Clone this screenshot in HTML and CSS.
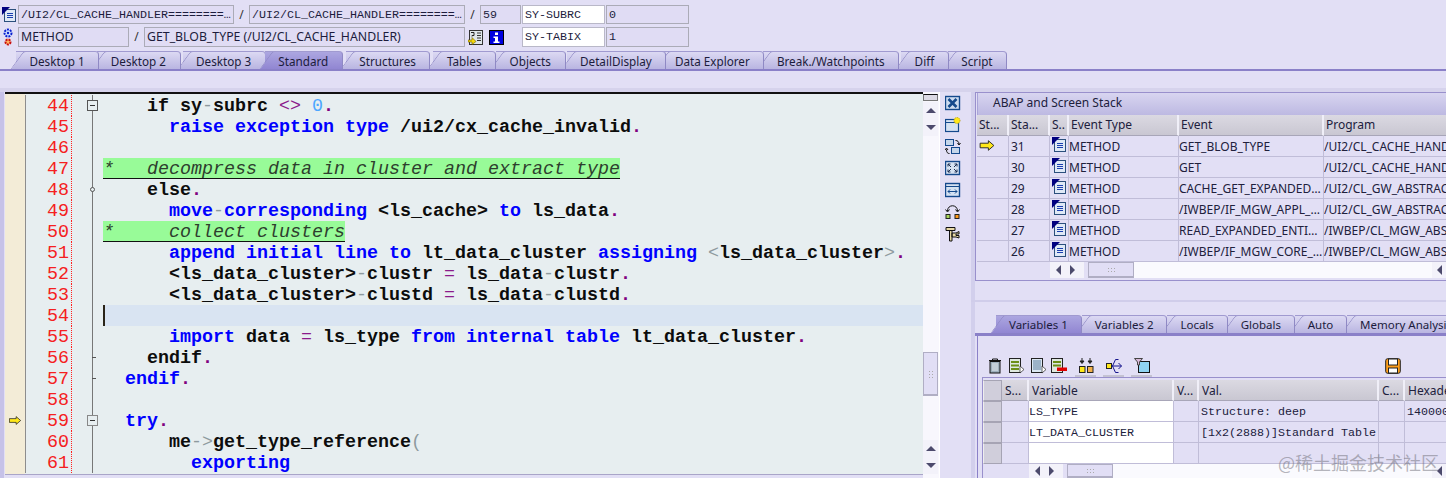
FILE: index.html
```html
<!DOCTYPE html>
<html lang="en">
<head>
<meta charset="utf-8">
<title>ABAP Debugger</title>
<link rel="stylesheet" href="styles.css">
</head>
<body>
<svg class="defs" width="0" height="0">
  <symbol id="doc" viewBox="0 0 16 16">
    <rect x="3.5" y="2.5" width="11" height="12" fill="#dfe9f6" stroke="#2b4f7c"/>
    <path d="M1 0h8L1 8z" fill="#00007f"/>
    <path d="M6 6.5h6M6 8.500h6M6 10.500h6" stroke="#1b3fb0" fill="none"/>
  </symbol>
  <symbol id="arrow" viewBox="0 0 16 12">
    <path d="M.5 3.500h9V.8l6 5.200-6 5.200V8.500h-9z" fill="#ffe81a" stroke="#222"/>
  </symbol>
</svg>

<div class="page">
  <header class="head">
    <div class="head-row">
      <svg class="ico-lead"><use href="#doc"/></svg>
      <div class="field mono w-prog">/UI2/CL_CACHE_HANDLER===================CP</div>
      <span class="sep">/</span>
      <div class="field mono w-prog2">/UI2/CL_CACHE_HANDLER===================CM00D</div>
      <span class="sep">/</span>
      <div class="field mono w-line">59</div>
      <div class="field input mono w-sy">SY-SUBRC</div>
      <div class="field mono w-val">0</div>
    </div>
    <div class="head-row tall">
      <svg class="ico-lead" viewBox="0 0 16 18">
        <circle cx="7" cy="5" r="3.500" fill="#cfe0ff" stroke="#0a1fd0" stroke-width="2" stroke-dasharray="2 1"/>
        <circle cx="7" cy="5" r="1.200" fill="#0a1fd0"/>
        <circle cx="7" cy="14" r="2.500" fill="#ffb060" stroke="#c80f0f" stroke-width="2" stroke-dasharray="2 1"/>
      </svg>
      <div class="field w-type">METHOD</div>
      <span class="sep">/</span>
      <div class="field w-event">GET_BLOB_TYPE (/UI2/CL_CACHE_HANDLER)</div>
      <svg class="ico-src" viewBox="0 0 15 15">
        <rect x="1.500" y=".5" width="13" height="14" fill="#dfe6ea" stroke="#333"/>
        <path d="M9 3h4M9 5.500h4M9 8h4M9 10.500h4" stroke="#333"/>
        <path d="M3 2.500h3v3H4v1" stroke="#222" fill="none"/>
        <path d="M0 10h4V7.500l4 4-4 3V12H0z" fill="#f5d90a" stroke="#6b5a00" stroke-width=".6"/>
      </svg>
      <svg class="ico-info" viewBox="0 0 15 15">
        <rect width="15" height="15" fill="#0000e0"/>
        <rect x=".5" y=".5" width="14" height="14" fill="none" stroke="#000"/>
        <path d="M6 2.500h3v2.500H6zM4.500 6.500H9v5h1.500v1.500h-6v-1.500H6V8H4.500z" fill="#fff"/>
      </svg>
      <div class="field input mono w-sy">SY-TABIX</div>
      <div class="field mono w-val">1</div>
    </div>
  </header>

  <nav class="tabs tabs-main">
    <span class="tab">Desktop 1</span>
    <span class="tab">Desktop 2</span>
    <span class="tab">Desktop 3</span>
    <span class="tab active">Standard</span>
    <span class="tab">Structures</span>
    <span class="tab">Tables</span>
    <span class="tab">Objects</span>
    <span class="tab">DetailDisplay</span>
    <span class="tab">Data Explorer</span>
    <span class="tab">Break./Watchpoints</span>
    <span class="tab">Diff</span>
    <span class="tab">Script</span>
  </nav>
  <div class="band"></div>

  <main class="main">
    <section class="editor-wrap">
      <div class="editor">
        <div class="line"><i class="gut"></i><b class="num">44</b><i class="fold"><i class="box"></i></i><code>    if sy<u>-</u>subrc <s>&lt;&gt;</s> <em>0</em><q>.</q></code></div>
        <div class="line"><i class="gut"></i><b class="num">45</b><i class="fold"></i><code>      <a>raise exception type</a> /ui2/cx_cache_invalid<q>.</q></code></div>
        <div class="line"><i class="gut"></i><b class="num">46</b><i class="fold"></i><code></code></div>
        <div class="line"><i class="gut"></i><b class="num">47</b><i class="fold"></i><code><span class="cmt">*   decompress data in cluster and extract type</span></code></div>
        <div class="line"><i class="gut"></i><b class="num">48</b><i class="fold"><i class="dot"></i></i><code>    else<q>.</q></code></div>
        <div class="line"><i class="gut"></i><b class="num">49</b><i class="fold"></i><code>      <a>move<u>-</u>corresponding</a> &lt;ls_cache&gt; <a>to</a> ls_data<q>.</q></code></div>
        <div class="line"><i class="gut"></i><b class="num">50</b><i class="fold"></i><code><span class="cmt">*     collect clusters</span></code></div>
        <div class="line"><i class="gut"></i><b class="num">51</b><i class="fold"></i><code>      <a>append initial line to</a> lt_data_cluster <a>assigning</a> <u>&lt;</u>ls_data_cluster<u>&gt;</u><q>.</q></code></div>
        <div class="line"><i class="gut"></i><b class="num">52</b><i class="fold"></i><code>      &lt;ls_data_cluster&gt;<u>-</u>clustr <s>=</s> ls_data<u>-</u>clustr<q>.</q></code></div>
        <div class="line"><i class="gut"></i><b class="num">53</b><i class="fold"></i><code>      &lt;ls_data_cluster&gt;<u>-</u>clustd <s>=</s> ls_data<u>-</u>clustd<q>.</q></code></div>
        <div class="line current"><i class="gut"></i><b class="num">54</b><i class="fold"></i><code></code></div>
        <div class="line"><i class="gut"></i><b class="num">55</b><i class="fold"></i><code>      <a>import</a> data <s>=</s> ls_type <a>from internal table</a> lt_data_cluster<q>.</q></code></div>
        <div class="line"><i class="gut"></i><b class="num">56</b><i class="fold"><i class="tick"></i></i><code>    endif<q>.</q></code></div>
        <div class="line"><i class="gut"></i><b class="num">57</b><i class="fold"><i class="tick"></i></i><code>  <a>endif</a><q>.</q></code></div>
        <div class="line"><i class="gut"></i><b class="num">58</b><i class="fold"></i><code></code></div>
        <div class="line"><i class="gut"><svg class="ico-pc"><use href="#arrow"/></svg></i><b class="num">59</b><i class="fold"><i class="box light"></i></i><code>  <a>try</a><q>.</q></code></div>
        <div class="line"><i class="gut"></i><b class="num">60</b><i class="fold"></i><code>      me<u>-&gt;</u>get_type_reference<u>(</u></code></div>
        <div class="line"><i class="gut"></i><b class="num">61</b><i class="fold"></i><code>        <a>exporting</a></code></div>
      </div>
      <div class="hbar"></div>
    </section>

    <aside class="vbar">
      <div class="grip"></div>
      <div class="sb-btn"><i class="tri up"></i></div>
      <div class="sb-btn"><i class="tri down"></i></div>
      <div class="track"></div>
      <div class="vthumb"><i class="dots"></i></div>
      <div class="track short"></div>
      <div class="sb-btn"><i class="tri up"></i></div>
      <div class="sb-btn"><i class="tri down"></i></div>
    </aside>

    <div class="tools">
      <svg viewBox="0 0 16 16"><rect x=".5" y="1.500" width="14" height="13" fill="#cddcf0" stroke="#14498c" stroke-width="1.400"/><path d="M3.500 4l8 8M11.500 4l-8 8" stroke="#14498c" stroke-width="2.600"/></svg>
      <svg viewBox="0 0 16 16"><rect x=".5" y="2.500" width="13" height="12" fill="#d5e2f2" stroke="#14498c" stroke-width="1.200"/><path d="M.5 5.500h13" stroke="#14498c"/><circle cx="12" cy="3.500" r="3" fill="#ffe81a" stroke="#b89d00" stroke-dasharray="1 1"/></svg>
      <svg viewBox="0 0 16 16"><rect x=".5" y=".5" width="8" height="6" fill="#c5d6ea" stroke="#14498c"/><rect x="6.500" y="8.500" width="8" height="6" fill="#c5d6ea" stroke="#14498c"/><path d="M10.500 1.500c2 0 3.500 1 3.500 4M12.500 4l1.500 2 1.500-2M4.500 14.500c-2 0-3-1-3-4M0 11l1.500-2L3 11" stroke="#111" fill="none"/></svg>
      <svg viewBox="0 0 16 16"><rect x=".5" y="1.500" width="14" height="13" fill="#d5e2f2" stroke="#14498c" stroke-width="1.400"/><path d="M3 4l3 3M3 4h2.500M3 4v2.500M12 4L9 7M12 4H9.500M12 4v2.500M3 12l3-3M3 12h2.500M3 12V9.500M12 12L9 9M12 12H9.500M12 12V9.500" stroke="#1c2f52" fill="none"/></svg>
      <svg viewBox="0 0 16 16"><rect x=".5" y="1.500" width="14" height="13" fill="#d5e2f2" stroke="#14498c" stroke-width="1.400"/><path d="M1 4.500h13" stroke="#14498c"/><path d="M3 9.500h9M5 7.500l-2 2 2 2M10 7.500l2 2-2 2" stroke="#14498c" fill="none"/></svg>
      <svg viewBox="0 0 16 16"><path d="M2.500 7c0-7 10-7 10 0" stroke="#111" fill="none"/><path d="M.5 5.500l2 2.500 2-2.500M10.500 5.500l2 2.500 2-2.500" stroke="#111" fill="none"/><rect x="1" y="10.500" width="4" height="4" fill="#a7d45a" stroke="#222"/><rect x="10" y="10.500" width="4" height="4" fill="#ff9a1a" stroke="#222"/></svg>
      <svg viewBox="0 0 16 16"><path d="M1 1.500h9v3H1zM4.500 4.500h2.500v10.500H4.500zM7 7h4l3-1.500v2.500h-3v1.500h3v2.500L11 11H7z" fill="#e8d9a5" stroke="#111"/></svg>
    </div>
    <div class="strip"></div>

    <div class="right">
      <section class="stack">
        <div class="title">ABAP and Screen Stack</div>
        <div class="grid stack-grid">
          <div class="hc">St...</div><div class="hc">Sta...</div><div class="hc">S..</div><div class="hc">Event Type</div><div class="hc">Event</div><div class="hc">Program</div>

          <div class="c"><svg class="ico-cur"><use href="#arrow"/></svg></div><div class="c">31</div><div class="c"><svg class="ico-row"><use href="#doc"/></svg></div><div class="c flush">METHOD</div><div class="c flush">GET_BLOB_TYPE</div><div class="c flush">/UI2/CL_CACHE_HANDLER===============CP</div>
          <div class="c"></div><div class="c">30</div><div class="c"><svg class="ico-row"><use href="#doc"/></svg></div><div class="c flush">METHOD</div><div class="c flush">GET</div><div class="c flush">/UI2/CL_CACHE_HANDLER===============CP</div>
          <div class="c"></div><div class="c">29</div><div class="c"><svg class="ico-row"><use href="#doc"/></svg></div><div class="c flush">METHOD</div><div class="c flush">CACHE_GET_EXPANDED_ENTITY</div><div class="c flush">/UI2/CL_GW_ABSTRACT_CACHE=========CP</div>
          <div class="c"></div><div class="c">28</div><div class="c"><svg class="ico-row"><use href="#doc"/></svg></div><div class="c flush">METHOD</div><div class="c flush">/IWBEP/IF_MGW_APPL_SRV_RUNTIME</div><div class="c flush">/UI2/CL_GW_ABSTRACT_CACHE=========CP</div>
          <div class="c"></div><div class="c">27</div><div class="c"><svg class="ico-row"><use href="#doc"/></svg></div><div class="c flush">METHOD</div><div class="c flush">READ_EXPANDED_ENTITY_SET</div><div class="c flush">/IWBEP/CL_MGW_ABS_DATA===========CP</div>
          <div class="c"></div><div class="c">26</div><div class="c"><svg class="ico-row"><use href="#doc"/></svg></div><div class="c flush">METHOD</div><div class="c flush">/IWBEP/IF_MGW_CORE_SRV_RUNTIME</div><div class="c flush">/IWBEP/CL_MGW_ABS_MODEL==========CP</div>
        </div>
        <div class="hscroll stack-scroll">
          <div class="sb-btn wide"><i class="tri left"></i></div>
          <div class="sb-btn wide"><i class="tri right"></i></div>
          <div class="hthumb"><i class="dots h"></i></div>
          <div class="htrack"></div>
          <div class="sb-btn end"><i class="tri left"></i></div>
        </div>
      </section>

      <div class="splitter"></div>

      <nav class="tabs tabs-sub">
        <span class="tab active">Variables 1</span>
        <span class="tab">Variables 2</span>
        <span class="tab">Locals</span>
        <span class="tab">Globals</span>
        <span class="tab">Auto</span>
        <span class="tab">Memory Analysis</span>
      </nav>
      <section class="vars">
        <div class="vtools">
          <svg class="vt" viewBox="0 0 14 16"><path d="M1 2.500h12M4.500 2.500V1h5v1.500" stroke="#111" fill="none"/><rect x="2" y="3.500" width="10" height="11.500" fill="#9eb0bd" stroke="#111"/><path d="M5 5v8M7 5v8M9 5v8" stroke="#e8eef2"/></svg>
          <svg class="vt t1" viewBox="0 0 16 16"><rect x=".5" y=".5" width="11" height="14" fill="#dfe8e0" stroke="#222"/><path d="M2 3h8v2H2zM2 6.500h8v2H2zM2 10h8v2H2z" fill="#6b8f16"/><path d="M11 8l4 3.500-4 3.500z" fill="#fff" stroke="#222" stroke-width=".7"/></svg>
          <svg class="vt t2" viewBox="0 0 16 16"><rect x=".5" y=".5" width="11" height="14" fill="#dbe7f2" stroke="#222"/><path d="M2 3h8M2 5h8M2 7h8M2 9h8M2 11h8" stroke="#5c7f9c"/><path d="M11 8l4 3.500-4 3.500z" fill="#fff" stroke="#222" stroke-width=".7"/></svg>
          <svg class="vt t3" viewBox="0 0 16 16"><rect x=".5" y=".5" width="11" height="14" fill="#dfe8e0" stroke="#222"/><path d="M2 3h8v2H2zM2 6.500h8v2H2z" fill="#6b8f16"/><rect x="6" y="9.500" width="10" height="3.500" fill="#e00000"/></svg>
          <span class="vt-group g1"><svg class="vt" viewBox="0 0 16 16"><path d="M4 0v3M2 3h4L4 5.500zM12 0v3M10 3h4l-2 2.500z" fill="#222" stroke="#222"/><rect x="1.500" y="8.500" width="5.500" height="6" fill="#ffe81a" stroke="#222"/><rect x="9.500" y="8.500" width="5.500" height="6" fill="#f2b04a" stroke="#222"/></svg></span>
          <span class="vt-group g2"><svg class="vt" viewBox="0 0 16 16"><rect x=".5" y="5.500" width="5" height="5" fill="#ffe81a" stroke="#222"/><path d="M5.500 8h10M15.500 8l-3-3M15.500 8l-3 3M6.500 8l3-6.500h3M6.500 8l3 6.500h3" stroke="#14148c" fill="none"/></svg></span>
          <span class="vt-group g3"><svg class="vt" viewBox="0 0 16 16"><rect x="4.500" y="3.500" width="11" height="11" fill="#8fd3f2" stroke="#111"/><path d="M.5 .5h8L5.500 4v3h-2V4z" fill="#d8b8d8" stroke="#444"/></svg></span>
          <span class="vt-save"><svg class="vt" viewBox="0 0 16 16"><rect x=".7" y=".7" width="14.600" height="14.600" rx="2" fill="#ff9f1a" stroke="#222"/><rect x="3.500" y="1" width="9" height="6" fill="#fff" stroke="#222"/><rect x="3.500" y="10" width="9" height="5" fill="#fff" stroke="#222"/></svg></span>
        </div>
        <div class="vtable">
          <div class="grid vars-grid">
            <div class="hc btn"></div><div class="hc">S...</div><div class="hc">Variable</div><div class="hc">V...</div><div class="hc">Val.</div><div class="hc">C...</div><div class="hc">Hexadecimal</div>

            <div class="c btn"></div><div class="c"></div><div class="c white mono">LS_TYPE</div><div class="c"></div><div class="c mono">Structure: deep</div><div class="c"></div><div class="c mono">14000000</div>
            <div class="c btn"></div><div class="c"></div><div class="c white mono">LT_DATA_CLUSTER</div><div class="c"></div><div class="c mono">[1x2(2888)]Standard Table</div><div class="c"></div><div class="c"></div>
            <div class="c btn"></div><div class="c"></div><div class="c white"></div><div class="c"></div><div class="c"></div><div class="c"></div><div class="c"></div>
          </div>
          <div class="hscroll vars-scroll">
            <div class="sb-btn wide"><i class="tri left"></i></div>
            <div class="sb-btn wide"><i class="tri right"></i></div>
            <div class="hthumb"><i class="dots h"></i></div>
            <div class="htrack"></div>
            <div class="sb-btn end"><i class="tri left"></i></div>
          </div>
        </div>
      </section>
    </div>
  </main>
  <div class="watermark">@稀土掘金技术社区</div>
</div>
</body>
</html>
```

FILE: styles.css
```css
* { box-sizing: border-box; }
html, body { margin: 0; padding: 0; }
body { background: #e2dff5; color: #20203c; font: 12px/1 "Noto Sans", "Liberation Sans", sans-serif; overflow: hidden; }
.defs { position: absolute; }
.page { position: relative; width: 1446px; height: 478px; overflow: hidden; display: flex; flex-direction: column; }

/* header */
.head { padding: 5px 0 0 1px; display: flex; flex-direction: column; gap: 3px; height: 51px; }
.head-row { display: flex; align-items: center; height: 19px; }
.head-row.tall { height: 20px; }
.ico-lead { width: 16px; height: 18px; flex: none; margin-right: 1px; }
.field { height: 100%; border: 1px solid #ababb7; background: #e0dcf4; padding: 0 2px; line-height: 18px; white-space: nowrap; overflow: hidden; text-overflow: ellipsis; flex: none; color: #1c1c3c; font-size: 12.300px; }
.mono { font-family: "Liberation Mono", monospace; font-size: 11.67px; }
.input { background: #fff; border-color: #b9b8c8; }
.sep { width: 15px; text-align: center; flex: none; color: #333; }
.w-prog { width: 216px; }
.w-prog2 { width: 216px; }
.w-line { width: 41px; margin-right: 1px; }
.w-sy { width: 83px; margin-right: 1px; }
.w-val { width: 83px; }
.w-type { width: 111px; }
.w-event { width: 321px; }
.ico-src { width: 15px; height: 15px; margin: 0 6px 0 3px; flex: none; }
.ico-info { width: 15px; height: 15px; margin-right: 18px; flex: none; }

/* tabs */
.tabs { display: flex; align-items: flex-end; flex: none; border-bottom: 2px solid #8a80c8; }
.tabs-main { height: 20px; padding-left: 16px; font-size: 11.700px; }
.tabs-sub { height: 21px; padding-left: 21px; border-bottom-width: 3px; font-size: 11.500px; }
.tab { position: relative; z-index: 0; height: 18px; padding: 0 13.600px 0 13.500px; line-height: 19px; background: linear-gradient(#dcd9f3, #b9b5e1); border-top: 1px solid #a09ad0; border-right: 1px solid #8f89c4; border-radius: 0 4px 0 0; white-space: nowrap; flex: none; color: #1c1c3c; }
.tabs-sub .tab { padding: 0 12.800px 0 13px; line-height: 18px; }
.tab::before { content: ""; position: absolute; z-index: -1; top: -1px; bottom: 0; left: 1px; width: 16px; background: linear-gradient(#dcd9f3, #b9b5e1); border-left: 1px solid #8f89c4; border-top: 1px solid #a09ad0; transform: skewX(-36deg); border-radius: 3px 0 0 0; }
.tab:nth-child(1) { z-index: 12; }
.tab:nth-child(2) { z-index: 11; }
.tab:nth-child(3) { z-index: 10; }
.tab:nth-child(4) { z-index: 9; }
.tab:nth-child(5) { z-index: 8; }
.tab:nth-child(6) { z-index: 7; }
.tab:nth-child(7) { z-index: 6; }
.tab:nth-child(8) { z-index: 5; }
.tab:nth-child(9) { z-index: 4; }
.tab:nth-child(10) { z-index: 3; }
.tab:nth-child(11) { z-index: 2; }
.tabs-main .tab:nth-child(2) { margin-left: -2px; }
.tabs-main .tab:nth-child(3) { margin-left: 2px; }
.tabs-main .tab:nth-child(4) { margin-left: -1px; }
.tabs-main .tab:nth-child(5) { margin-left: 3px; }
.tabs-main .tab:nth-child(6) { margin-left: 3px; }
.tabs-main .tab:nth-child(8) { margin-left: 1px; }
.tabs-main .tab:nth-child(9) { margin-left: -5px; }
.tabs-main .tab:nth-child(10) { margin-left: -1px; }
.tabs-main .tab:nth-child(11) { margin-left: 2px; }
.tabs-main .tab:nth-child(12) { margin-left: -1px; }
.tab.active { background: linear-gradient(#aca6e0, #9186d2); z-index: 20; }
.tab.active::before { background: linear-gradient(#aca6e0, #9186d2); }
.band { height: 21px; flex: none; background: linear-gradient(#e2dff5 17px, #d6d3ec 17px); }

/* main */
.main { display: flex; flex: 1; min-height: 0; background: #e2dff5; }
.editor-wrap { width: 923px; flex: none; padding-left: 5px; background: linear-gradient(90deg, #c6c2e8 4px, #e2dff5 4px); display: flex; flex-direction: column; }
.editor { flex: 1; min-height: 0; overflow: hidden; border-top: 2px solid #111; background: linear-gradient(90deg, #f3ecd7 20px, #e7eef0 20px); padding-top: 1px; }
.line { display: grid; grid-template-columns: 20px 1px 46px 31px 1fr; grid-template-rows: 21px; height: 21px; }
.gut { grid-column: 1; background: #f3ecd7; display: flex; align-items: center; justify-content: center; }
.line::before { content: ""; grid-column: 2; grid-row: 1; background: #8d8d8d; }
.num { grid-column: 3; font: 18.33px/23px "Liberation Mono", monospace; color: #f52020; text-align: right; padding-right: 2px; border-right: 1px dotted #ff2020; }
.fold { grid-column: 4; position: relative; display: block; }
.fold::before { content: ""; position: absolute; left: 20px; top: 0; bottom: 0; width: 1px; background: #777; }
.box { position: absolute; left: 15px; top: 5px; width: 11px; height: 11px; border: 1px solid #555; background: #e7eef0; }
.box::after { content: ""; position: absolute; left: 2px; top: 4px; width: 5px; height: 1px; background: #333; }
.box.light { border-color: #888; }
.dot { position: absolute; left: 18px; top: 8px; width: 5px; height: 5px; border-radius: 50%; border: 1px solid #555; background: #e7eef0; }
.tick { position: absolute; left: 20px; top: 10px; width: 4px; height: 1px; background: #555; }
code { grid-column: 5; display: block; font: bold 18.33px/23px "Liberation Mono", monospace; color: #0c0c0c; white-space: pre; }
code a { color: #0000ff; }
code u { color: #8e9a9e; font-weight: normal; text-decoration: none; }
code s { color: #8b1a8b; font-weight: normal; text-decoration: none; }
code em { color: #4da6ff; font-weight: normal; font-style: normal; }
code q { color: #800080; quotes: none; }
.cmt { display: inline-block; height: 21px; vertical-align: top; background: #98fb98; border-bottom: 1px solid #111; font-weight: normal; font-style: italic; color: #2e3e2e; }
.line.current code { background: #d9e4f2; border-left: 2px solid #2a2418; }
.ico-pc { width: 12px; height: 9px; }
.hbar { height: 4px; flex: none; background: #e2dff5; border-top: 1px solid #a9a5c8; }

/* scrollbars */
.vbar { width: 17px; flex: none; display: flex; flex-direction: column; background: #f8f7fd; border-right: 1px solid #fff; padding: 0 1px 4px 0; }
.grip { height: 7px; flex: none; margin: 2px 0 1px; background: #dcdae4; border: 1px solid #777; border-top-color: #111; }
.sb-btn { height: 17px; display: flex; align-items: center; justify-content: center; flex: none; background: #f3f2fa; }
.track { flex: 1; }
.track.short { flex: none; height: 44px; }
.vthumb { height: 44px; flex: none; background: #e1def5; border: 1px solid #b0aec4; border-bottom-width: 2px; display: flex; align-items: center; justify-content: center; }
.dots { width: 6px; height: 8px; background: radial-gradient(circle, #aaa 1px, transparent 1px) 0 0 / 3px 3px; display: block; }
.dots.h { width: 9px; height: 6px; }
.tri { display: block; width: 0; height: 0; border: 5px solid transparent; }
.tri.up { border-bottom: 5px solid #4c4a6c; border-top: 0; }
.tri.down { border-top: 5px solid #4c4a6c; border-bottom: 0; }
.tri.left { border-right: 5px solid #4c4a6c; border-left: 0; }
.tri.right { border-left: 5px solid #4c4a6c; border-right: 0; margin-left: 3px; }

.tools { width: 31px; flex: none; padding: 3px 0 0 5px; display: flex; flex-direction: column; gap: 5.800px; }
.tools svg { width: 16px; height: 16px; flex: none; }
.strip { width: 4px; flex: none; background: #d2cfec; }

/* right */
.right { flex: 1; min-width: 0; display: flex; flex-direction: column; }
.stack { height: 189px; flex: none; border: 1px solid #9990cc; border-right: 0; padding-left: 1px; }
.title { height: 22px; padding-left: 15px; line-height: 20px; background: linear-gradient(#d8d5f0, #bdb9e2); border-left: 1px solid #a9a4d8; }
.grid { display: grid; grid-auto-rows: 21px; }
.stack-grid { grid-template-columns: 32px 41px 19px 110px 145px 177px; overflow: hidden; }
.hc { background: linear-gradient(#dbd9e2, #c9c7d2); border-right: 2px solid #f0eff8; border-bottom: 1px solid #a8a6b8; padding-left: 2px; line-height: 20px; white-space: nowrap; overflow: hidden; }
.c { border-right: 1px solid #c0bdd8; border-bottom: 1px solid #c0bdd8; padding-left: 2px; line-height: 22px; white-space: nowrap; overflow: hidden; text-overflow: ellipsis; background: #e2dff5; }
.c.flush { padding-left: 0; }
.c.white { background: #fff; padding-left: 0; }
.c.btn, .hc.btn { background: #d0cedb; border: 1px solid #a6a4b4; border-left-color: #eee; padding: 0; }
.ico-row { width: 16px; height: 16px; display: block; margin: 1px 0 0 -1px; }
.ico-cur { width: 16px; height: 11px; display: block; margin: 4px 0 0 0; }
.hscroll { display: flex; height: 16px; }
.stack-scroll { margin-left: 73px; }
.vars-scroll { margin-left: 46px; height: 14px; }
.sb-btn.wide { width: 17px; height: auto; flex: none; }
.sb-btn.end { width: 14px; height: auto; flex: none; margin-left: auto; }
.hthumb { width: 46px; flex: none; background: #e1def5; border: 1px solid #b0aec4; border-bottom-width: 2px; margin-left: 4px; display: flex; align-items: center; justify-content: center; }
.htrack { flex: 1; background: #fafafe; }

.splitter { height: 2px; margin: 19px 0 13px -4px; flex: none; background: #d0cdea; }
.vars { flex: 1; min-height: 0; margin-left: 2px; border-left: 1px solid #8a80c8; padding: 21px 0 0 4px; }
.vtools { display: flex; align-items: flex-start; height: 20px; padding: 1px 0 0 5px; }
.vt { width: 16px; height: 16px; flex: none; display: block; }
.t1 { margin-left: 6px; }
.t2 { margin-left: 6px; }
.t3 { margin-left: 4px; }
.vt-group { display: flex; justify-content: center; width: 21px; height: 19px; border-bottom: 2px solid #c4c2d2; flex: none; }
.g1 { margin-left: 8px; }
.g2 { margin-left: 7px; }
.g3 { margin-left: 7px; }
.vt-save { margin-left: 233px; }
.vtable { border-top: 1px solid #9990cc; border-left: 1px solid #9990cc; padding: 2px 0 0; }
.vars-grid { grid-template-columns: 19px 27px 145px 25px 180px 26px 60px; overflow: hidden; }
.vars-grid .hc { line-height: 22px; padding-left: 3px; }
.vars-grid .c:nth-child(7n+3) { padding-left: 0; }

.watermark { position: absolute; right: 7px; bottom: 5px; font: 18px/1.100 "Noto Sans CJK SC", sans-serif; color: rgba(110, 110, 120, .5); white-space: nowrap; }
```
